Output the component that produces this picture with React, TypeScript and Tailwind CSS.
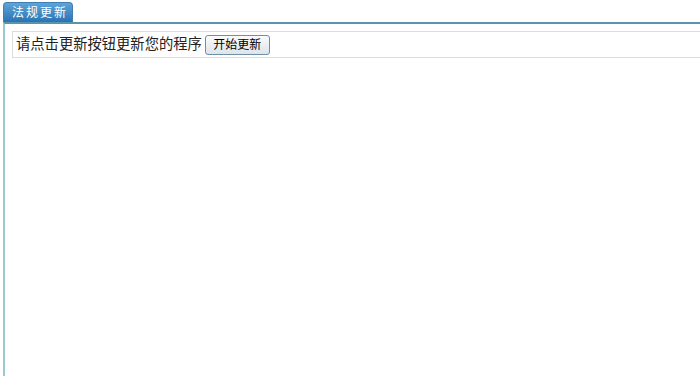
export default function App() {
  return (
    <div
      className="w-[700px] h-[376px] bg-white overflow-hidden"
      style={{ fontFamily: '"Liberation Sans", "Noto Sans CJK SC", sans-serif' }}
    >
      <div className="flex h-[22px] pl-[3px] items-end">
        <div className="h-[20px] w-[70px] rounded-t-[4px] border border-b-0 border-[#3d7fb5] bg-gradient-to-b from-[#5ea4d8] to-[#2a74b4] text-white text-[12px] tracking-[2px] leading-[20px] pl-[8px]">
          法规更新
        </div>
      </div>
      <div className="h-[354px] border-t-[2px] border-l-[2px] border-t-[#5a93ad] border-l-[#9cc8d0] ml-[3px] pt-[7px] pl-[7px]">
        <div className="h-[27px] border border-r-0 border-[#dcdcdc] flex items-center pl-[3px] gap-[3px]">
          <span className="text-[14.3px] text-[#222]">请点击更新按钮更新您的程序</span>
          <button className="h-[20px] w-[65px] rounded-[3px] border border-[#6f8fa8] bg-gradient-to-b from-[#fbfbfb] to-[#dde4ea] text-[12px] text-black leading-none">
            开始更新
          </button>
        </div>
      </div>
    </div>
  );
}
